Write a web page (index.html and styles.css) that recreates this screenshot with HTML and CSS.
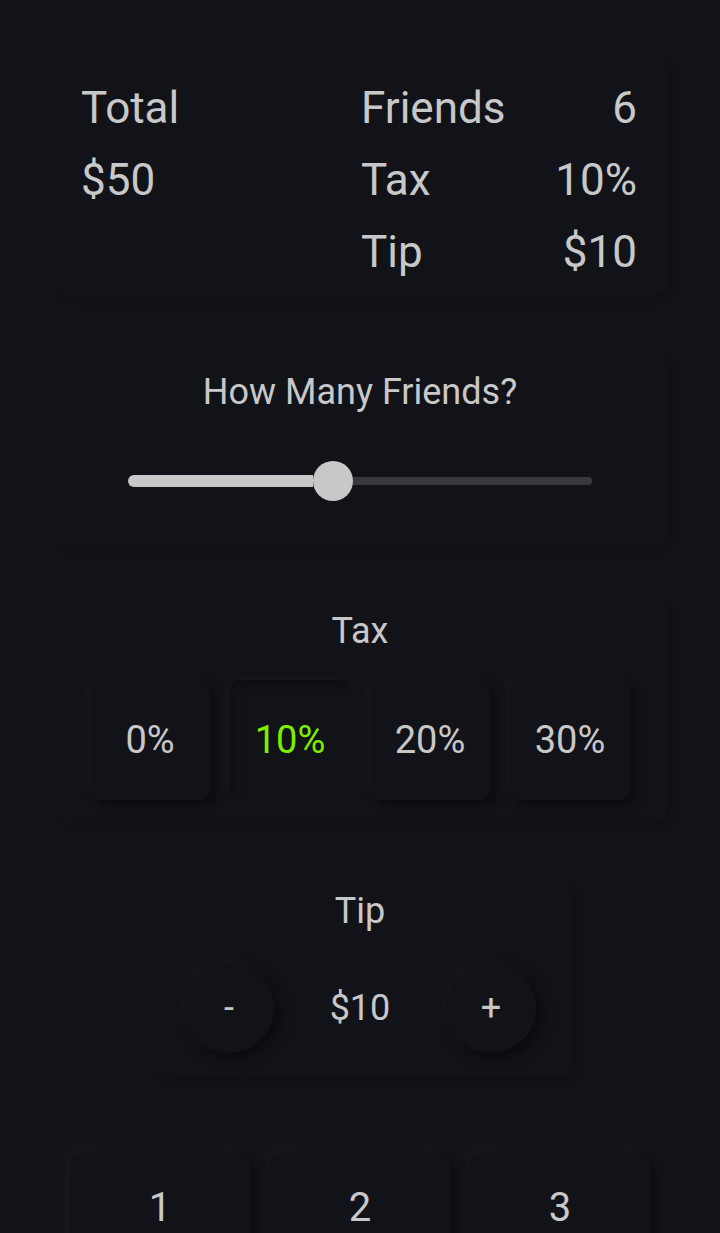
FILE: index.html
```html
<!DOCTYPE html>
<html lang="en">
<head>
<meta charset="utf-8">
<title>Split Bill</title>
<link rel="stylesheet" href="styles.css">
</head>
<body>
<main class="app">
  <section class="card summary">
    <div class="sum-left">
      <div class="line">Total</div>
      <div class="line">$50</div>
    </div>
    <div class="sum-right">
      <div class="line pair"><span>Friends</span><span>6</span></div>
      <div class="line pair"><span>Tax</span><span>10%</span></div>
      <div class="line pair"><span>Tip</span><span>$10</span></div>
    </div>
  </section>

  <section class="card friends">
    <div class="title">How Many Friends?</div>
    <div class="slider">
      <div class="fill" style="width:185px"></div>
      <div class="thumb"></div>
      <div class="rest"></div>
    </div>
  </section>

  <section class="card tax">
    <div class="title">Tax</div>
    <div class="tax-row">
      <button class="tbtn">0%</button>
      <button class="tbtn active">10%</button>
      <button class="tbtn">20%</button>
      <button class="tbtn">30%</button>
    </div>
  </section>

  <section class="card tip">
    <div class="title">Tip</div>
    <div class="tip-row">
      <button class="round">-</button>
      <span class="tip-val">$10</span>
      <button class="round">+</button>
    </div>
  </section>

  <section class="keypad">
    <button class="key">1</button>
    <button class="key">2</button>
    <button class="key">3</button>
  </section>
</main>
</body>
</html>
```
FILE: styles.css
```css
html, body {
  margin: 0;
  padding: 0;
  background: #13141a;
}
body {
  font-family: Roboto, "Noto Sans", sans-serif;
  color: #c8c8c8;
  height: 1233px;
  overflow: hidden;
}
.app {
  display: flex;
  flex-direction: column;
  align-items: center;
  padding-top: 52px;
}
.card {
  background: #121318;
  border-radius: 16px;
  box-shadow: -6px -6px 14px rgba(255, 255, 255, 0.012), 6px 6px 14px rgba(0, 0, 0, 0.22);
  box-sizing: border-box;
}
.summary {
  width: 616px;
  display: grid;
  grid-template-columns: 280px 1fr;
  padding: 20px 31px 8px 29px;
  font-size: 44px;
}
.line {
  height: 72px;
  line-height: 72px;
}
.pair {
  display: flex;
  justify-content: space-between;
}
.title {
  font-size: 36px;
  text-align: center;
  line-height: 42px;
}
.friends {
  width: 616px;
  margin-top: 54px;
  padding: 21px 76px 46px;
}
.slider {
  margin-top: 48px;
  display: flex;
  align-items: center;
  height: 40px;
}
.fill {
  height: 12px;
  background: #c8c8c8;
  border-radius: 6px 0 0 6px;
}
.thumb {
  width: 40px;
  height: 40px;
  border-radius: 50%;
  background: #c8c8c8;
  flex: none;
}
.rest {
  flex: 1;
  height: 8px;
  background: #38393e;
  border-radius: 0 4px 4px 0;
}
.tax {
  width: 616px;
  margin-top: 46px;
  padding: 17px 0 23px;
}
.tax-row {
  margin-top: 28px;
  display: flex;
  justify-content: center;
  gap: 20px;
}
button {
  font-family: Roboto, "Noto Sans", sans-serif;
  color: #c8c8c8;
  border: none;
  padding: 0;
  background: #121318;
}
.tbtn {
  width: 120px;
  height: 120px;
  border-radius: 10px;
  font-size: 38px;
  box-shadow: -5px -5px 10px rgba(255, 255, 255, 0.022), 5px 5px 10px rgba(0, 0, 0, 0.4);
}
.tbtn.active {
  color: #7cf000;
  box-shadow: inset 4px 4px 8px rgba(0, 0, 0, 0.25), inset -3px -3px 8px rgba(255, 255, 255, 0.015), -5px -5px 10px rgba(255, 255, 255, 0.015);
}
.tip {
  width: 424px;
  margin-top: 51px;
  padding: 16px 36px 25px;
}
.tip-row {
  margin-top: 31px;
  display: flex;
  justify-content: space-between;
  align-items: center;
}
.round {
  width: 90px;
  height: 90px;
  border-radius: 50%;
  font-size: 36px;
  box-shadow: -6px -6px 14px rgba(255, 255, 255, 0.025), 6px 6px 14px rgba(0, 0, 0, 0.45);
}
.tip-val {
  font-size: 36px;
}
.keypad {
  margin-top: 75px;
  display: grid;
  grid-template-columns: repeat(3, 180px);
  gap: 20px;
}
.key {
  height: 108px;
  border-radius: 12px;
  font-size: 40px;
  box-shadow: -6px -6px 14px rgba(255, 255, 255, 0.025), 6px 6px 14px rgba(0, 0, 0, 0.45);
}
```
